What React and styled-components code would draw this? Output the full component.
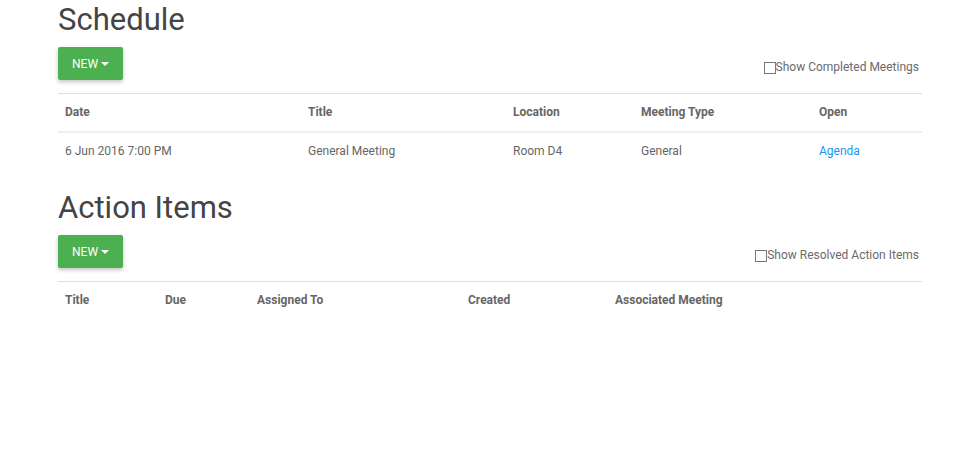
import styled, { createGlobalStyle } from "styled-components";

const GlobalStyle = createGlobalStyle`
  body {
    margin: 0;
    background: #fff;
    font-family: Roboto, "Liberation Sans", Arial, sans-serif;
    color: #666;
  }
`;

const Page = styled.div`
  width: 864px;
  padding: 3px 0 0 58px;
`;

const Section = styled.section`
  margin-bottom: 20px;
`;

const Heading = styled.h2`
  margin: 0 0 11px;
  font-size: 31px;
  line-height: 33px;
  font-weight: 400;
  color: #444;
`;

const Toolbar = styled.div`
  display: flex;
  justify-content: space-between;
  align-items: flex-start;
  padding-bottom: 13px;
  border-bottom: 1px solid #e0e0e0;
`;

const NewButton = styled.button`
  display: flex;
  align-items: center;
  gap: 3px;
  height: 33px;
  padding: 0 14px;
  border: none;
  border-radius: 2px;
  background: #4caf50;
  color: #fff;
  font-family: inherit;
  font-size: 12px;
  box-shadow: 0 2px 4px rgba(0, 0, 0, 0.24);
  cursor: pointer;
`;

const Caret = styled.span`
  width: 0;
  height: 0;
  border-left: 4px solid transparent;
  border-right: 4px solid transparent;
  border-top: 4px solid #fff;
`;

const CheckLabel = styled.label`
  display: flex;
  align-items: center;
  margin: 13px 3px 0 0;
  font-size: 12px;
  color: #6b6b6b;
`;

const Box = styled.span`
  width: 10px;
  height: 10px;
  margin-top: 2px;
  border: 1px solid #777;
  background: #fff;
`;

const Table = styled.table`
  width: 100%;
  border-collapse: collapse;
  table-layout: fixed;
  font-size: 12px;
`;

const Th = styled.th`
  height: 35px;
  padding: 0 7px 2px;
  text-align: left;
  font-weight: 700;
  color: #666;
  border-bottom: ${(p) => (p.$line ? "2px solid #eee" : "none")};
`;

const Td = styled.td`
  height: 35px;
  padding: 0 7px 3px;
  color: #666;
`;

const Link = styled.a`
  color: #2196f3;
  text-decoration: none;
`;

function Header({ title, label }) {
  return (
    <>
      <Heading>{title}</Heading>
      <Toolbar>
        <NewButton>
          NEW <Caret />
        </NewButton>
        <CheckLabel>
          <Box />
          {label}
        </CheckLabel>
      </Toolbar>
    </>
  );
}

export default function App() {
  const meetingCols = [
    ["Date", 243],
    ["Title", 205],
    ["Location", 128],
    ["Meeting Type", 178],
    ["Open", 110],
  ];
  const actionCols = [
    ["Title", 100],
    ["Due", 92],
    ["Assigned To", 211],
    ["Created", 147],
    ["Associated Meeting", 314],
  ];

  return (
    <Page>
      <GlobalStyle />
      <Section>
        <Header title="Schedule" label="Show Completed Meetings" />
        <Table>
          <colgroup>
            {meetingCols.map(([n, w]) => (
              <col key={n} style={{ width: w }} />
            ))}
          </colgroup>
          <thead>
            <tr>
              {meetingCols.map(([n]) => (
                <Th key={n} $line>
                  {n}
                </Th>
              ))}
            </tr>
          </thead>
          <tbody>
            <tr>
              <Td>6 Jun 2016 7:00 PM</Td>
              <Td>General Meeting</Td>
              <Td>Room D4</Td>
              <Td>General</Td>
              <Td>
                <Link href="#">Agenda</Link>
              </Td>
            </tr>
          </tbody>
        </Table>
      </Section>
      <Section>
        <Header title="Action Items" label="Show Resolved Action Items" />
        <Table>
          <colgroup>
            {actionCols.map(([n, w]) => (
              <col key={n} style={{ width: w }} />
            ))}
          </colgroup>
          <thead>
            <tr>
              {actionCols.map(([n]) => (
                <Th key={n}>{n}</Th>
              ))}
            </tr>
          </thead>
        </Table>
      </Section>
    </Page>
  );
}
